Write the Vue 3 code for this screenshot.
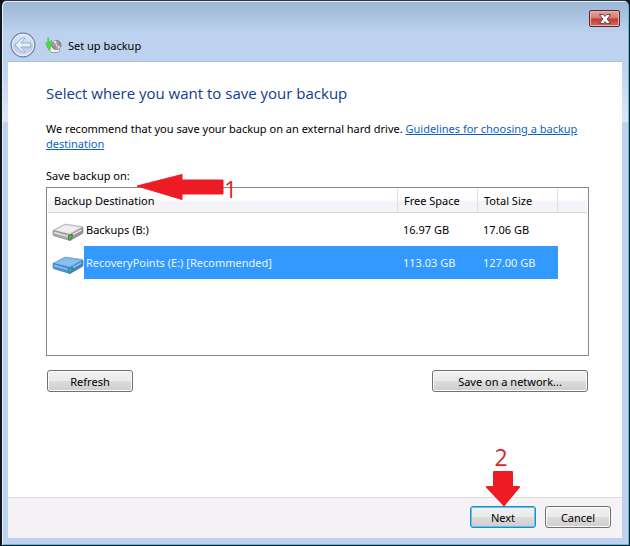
<script setup>
import { ref } from 'vue'

const drives = [
  { name: 'Backups (B:)', free: '16.97 GB', total: '17.06 GB' },
  { name: 'RecoveryPoints (E:) [Recommended]', free: '113.03 GB', total: '127.00 GB' },
]
const selected = ref(1)
</script>

<template>
  <div class="window">
    <header class="titlebar">
      <button class="close" aria-label="Close">
        <svg width="14" height="12" viewBox="0 0 14 12">
          <path d="M1.5 1.5h4L7 3.4l1.5-1.9h4L9.2 6l3.3 4.5h-4L7 8.6l-1.500 1.9h-4L4.8 6z" fill="#fff" stroke="#5b4a55" stroke-width="1" />
        </svg>
      </button>
    </header>
    <div class="caption">
      <button class="back" aria-label="Back">
        <svg width="26" height="26" viewBox="0 0 26 26">
          <defs>
            <linearGradient id="orb" x1="0" y1="0" x2="0" y2="1">
              <stop offset="0" stop-color="#dfe9f6" />
              <stop offset=".48" stop-color="#c6d6ea" />
              <stop offset=".52" stop-color="#b3c7e0" />
              <stop offset="1" stop-color="#d3e2f5" />
            </linearGradient>
          </defs>
          <circle cx="13" cy="13" r="11.8" fill="url(#orb)" stroke="#6d7f9b" stroke-width="1.2" />
          <circle cx="13" cy="13" r="10.7" fill="none" stroke="#eef4fc" stroke-width="1" />
          <path d="M5 13l7-7h3.200l-4.400 5h9.700v4h-9.700l4.400 5H12z" fill="#e6eef8" stroke="#94a8c4" stroke-width=".9" stroke-linejoin="round" />
        </svg>
      </button>
      <svg class="app-icon" width="17" height="18" viewBox="0 0 17 18">
        <path d="M4 12.500l2-3h6l3 4.500-2 2.500H6.500l-2.500-2z" fill="#f2f3ee" stroke="#85918c" stroke-width=".8" />
        <circle cx="11.4" cy="9" r="4.600" fill="#a8a3ac" stroke="#666774" stroke-width=".8" />
        <path d="M11.4 9L8 5.600l3-1.300zM11.4 9l4.200 2-2 2.300z" fill="#dddce4" />
        <path d="M11.4 9l3.300-3 .9 2.500zM11.4 9l-3.800 2 1.500 2z" fill="#aa7382" />
        <circle cx="11.4" cy="9" r="1.400" fill="#f0f0f2" stroke="#73727d" stroke-width=".6" />
        <path d="M3 1.200l1.700 5.300L6.500 4l-.2 5.200L5 14.500 2.500 12 .4 6.200l2 1.500z" fill="#48dc42" stroke="#36b433" stroke-width=".4" />
      </svg>
      <span>Set up backup</span>
    </div>

    <main class="page">
      <h1>Select where you want to save your backup</h1>
      <p class="intro">We recommend that you save your backup on an external hard drive. <a href="#guidelines">Guidelines for choosing a backup destination</a></p>
      <div class="field">
        <span id="drives-label" class="label">Save backup on:</span>
        <div class="note note-one">
          <svg width="88" height="26" viewBox="0 0 88 26">
            <path d="M1 12L46 .5V6h41v14H46v5.500z" fill="#ed1c24" stroke="#ed1c24" stroke-linejoin="round" />
          </svg>
          <span>1</span>
        </div>
      </div>
      <div class="list">
        <table aria-labelledby="drives-label">
          <colgroup>
            <col class="c-icon"><col><col class="c-size"><col class="c-size"><col class="c-rest">
          </colgroup>
          <thead>
            <tr><th colspan="2">Backup Destination</th><th>Free Space</th><th>Total Size</th><th></th></tr>
          </thead>
          <tbody>
            <tr v-for="(d, i) in drives" :key="d.name" :class="{ selected: i === selected }" @click="selected = i">
              <td class="icon">
                <svg width="32" height="20" viewBox="0 0 32 20" class="drive">
                  <path class="top" d="M1 8.500L12 2.600q1-.5 2-.4L30 4.500q1.500.3.500 1L18 12.800z" />
                  <path class="front" d="M1 8.500l17 4.300v5.700L2 13.800q-1-.4-1-1.300z" />
                  <path class="side" d="M18 12.800L31 5.500v4.700q0 1-1 1.500L18 18.500z" />
                  <path class="shine" d="M4 8.200l9-4.700 14 1.900-9.500 5.600z" />
                  <path class="line" d="M2 10.500l14 3.900M21 12.500l8.500-4.700" />
                  <path class="light" d="M16.500 13.600l3.500-1.500v4.200l-2.500 1.700-1-.3z" />
                </svg>
              </td>
              <td class="name">{{ d.name }}</td>
              <td>{{ d.free }}</td>
              <td>{{ d.total }}</td>
              <td class="rest"></td>
            </tr>
          </tbody>
        </table>
      </div>
      <div class="actions">
        <button class="btn refresh">Refresh</button>
        <button class="btn network">Save on a network...</button>
      </div>
    </main>

    <footer class="footer">
      <div class="next">
        <button class="btn primary">Next</button>
        <div class="note note-two">
          <span>2</span>
          <svg width="36" height="36" viewBox="0 0 36 36">
            <path d="M9 2h18v15h7L19 35 2 17h7z" fill="#ed1c24" stroke="#ed1c24" stroke-width="2" stroke-linejoin="round" />
          </svg>
        </div>
      </div>
      <button class="btn">Cancel</button>
    </footer>
  </div>
</template>

<style>
body {
  background: #101418;
}
</style>

<style scoped>
.window {
  box-sizing: border-box;
  min-height: 100vh;
  display: flex;
  flex-direction: column;
  padding: 0 7px 7px 6px;
  border: 1px solid #101820;
  border-left-width: 2px;
  border-top-color: #303641;
  border-radius: 6px 6px 0 0;
  background: linear-gradient(#9bb5d4, #bdd2ee 32px, #bdd2ee 62px, #dce8f7 120px, #bdd2ee 122px);
  box-shadow: inset 1px 1px 0 #e4eefa, inset -1px -1px 0 #4cc3e4;
  font: 11px/15px "Noto Sans", "Open Sans", sans-serif;
  color: #000;
}
button {
  font: inherit;
  color: inherit;
  padding: 0;
}
.titlebar {
  display: flex;
  justify-content: flex-end;
  height: 30px;
  padding: 9px 2px 0 0;
  box-sizing: border-box;
}
.close {
  width: 31px;
  height: 17px;
  display: flex;
  align-items: center;
  justify-content: center;
  border: 1px solid #562632;
  border-radius: 2px;
  background: linear-gradient(#e5a69b, #d3796c 48%, #bd3c2d 52%, #d26b59);
  box-shadow: inset 0 0 0 1px #eab2a7;
}
.caption {
  display: flex;
  align-items: center;
  height: 31px;
  padding: 0 0 2px 2px;
  box-sizing: border-box;
  border-bottom: 1px solid #a9bfdc;
}
.back {
  display: flex;
  border: 0;
  background: none;
}
.app-icon {
  margin: 0 6px 0 9px;
}
.page {
  flex: 1;
  padding: 21px 33px 16px 38px;
  background: #fff;
}
h1 {
  margin: 0;
  font-family: "Open Sans", sans-serif;
  font-size: 15px;
  line-height: 20px;
  font-weight: 400;
  color: #103a94;
}
.intro {
  margin: 18px 0 17px;
}
a {
  color: #0b62c4;
}
.field {
  position: relative;
  display: flex;
  margin-bottom: 4px;
}
.note {
  position: absolute;
  display: flex;
  color: #e4222b;
  font: 23px/26px "Open Sans", sans-serif;
  pointer-events: none;
}
.note svg {
  flex: none;
}
.note-one {
  left: 90px;
  top: 6px;
}
.note-one span {
  padding-top: 2px;
}
.list {
  height: 165px;
  padding: 1px;
  border: 1px solid #828790;
  background: #fff;
}
table {
  width: 100%;
  table-layout: fixed;
  border-collapse: separate;
  border-spacing: 0;
}
.c-icon {
  width: 36px;
}
.c-size {
  width: 80px;
}
.c-rest {
  width: 29px;
}
th {
  height: 24px;
  box-sizing: border-box;
  padding: 0 0 0 6px;
  text-align: left;
  font-weight: 400;
  background: linear-gradient(#fff 45%, #f4f3f8 55%, #f5f4f9);
  border-right: 1px solid #dfdfe6;
  border-bottom: 1px solid #d8d5db;
}
th:last-child {
  border-right: 0;
}
td {
  height: 33px;
  box-sizing: border-box;
  padding: 0 0 0 5px;
  white-space: nowrap;
}
td.icon {
  padding: 4px 0 0 4px;
}
td.name {
  padding-left: 2px;
}
.selected td:not(.icon, .rest) {
  background: #3399ff;
  color: #e9f5ff;
}
.drive {
  display: block;
}
.top {
  fill: #dadada;
  stroke: #a6a6a6;
  stroke-width: 0.7;
}
.front {
  fill: #a9a8a9;
  stroke: #8c8b8c;
  stroke-width: 0.7;
}
.side {
  fill: #979494;
  stroke: #878483;
  stroke-width: 0.7;
}
.shine {
  fill: #efefef;
}
.line {
  fill: none;
  stroke: #e5e5e5;
  stroke-width: 1.5;
}
.light {
  fill: #50b743;
  stroke: #3b6b38;
  stroke-width: 0.7;
}
.selected .top {
  fill: #76b4ea;
  stroke: #5a95cc;
}
.selected .front {
  fill: #4f93d0;
  stroke: #3a7ab8;
}
.selected .side {
  fill: #4384c1;
  stroke: #3975b0;
}
.selected .shine {
  fill: #88c1f4;
}
.selected .line {
  stroke: #8ac1f0;
}
.selected .light {
  fill: #42a4b4;
  stroke: #2c769b;
}
.actions {
  display: flex;
  justify-content: space-between;
  padding: 14px 1px 0;
}
.btn {
  box-sizing: border-box;
  width: 66px;
  height: 22px;
  border: 1px solid #707070;
  border-radius: 3px;
  background: linear-gradient(#f3f2f3, #ebeaeb 48%, #dddcdd 52%, #cfcdcf);
  box-shadow: inset 0 0 0 1px #fbfbfb;
}
.refresh {
  width: 86px;
}
.network {
  width: 156px;
}
.primary {
  border-color: #3c7fb1;
  box-shadow: inset 0 0 0 1px #48d1f7;
}
.footer {
  display: flex;
  justify-content: flex-end;
  gap: 9px;
  padding: 8px 11px 10px;
  background: #f6f3f7;
  border-top: 1px solid #dcdadf;
}
.next {
  position: relative;
}
.note-two {
  left: 0;
  right: 0;
  bottom: 100%;
  flex-direction: column;
  align-items: center;
}
.note-two span {
  padding-right: 4px;
}
</style>
